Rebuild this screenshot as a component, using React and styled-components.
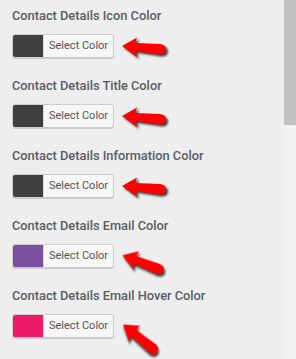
import React from "react";
import styled, { createGlobalStyle } from "styled-components";

const GlobalStyle = createGlobalStyle`
  html, body {
    margin: 0;
    padding: 0;
    background: #eeeeee;
    overflow: hidden;
  }
`;

const fields = [
  { label: "Contact Details Icon Color", color: "#404040", angle: 0 },
  { label: "Contact Details Title Color", color: "#404040", angle: 0 },
  { label: "Contact Details Information Color", color: "#404040", angle: 0 },
  { label: "Contact Details Email Color", color: "#7b4fa0", angle: 16 },
  { label: "Contact Details Email Hover Color", color: "#ef1a66", angle: 34 },
];

export default function App() {
  return (
    <>
      <GlobalStyle />
      <Page>
        <Panel>
          {fields.map((field, index) => (
            <Field key={index}>
              <Label>{field.label}</Label>
              <Row>
                <PickerButton>
                  <Swatch color={field.color} />
                  <ButtonText>Select Color</ButtonText>
                </PickerButton>
                <Arrow angle={field.angle} />
              </Row>
            </Field>
          ))}
        </Panel>
        <Track>
          <Thumb />
        </Track>
      </Page>
    </>
  );
}

function Arrow({ angle }) {
  return (
    <ArrowSvg width="50" height="24" viewBox="0 0 50 24" angle={angle}>
      <path
        d="M2 10 L17 1.5 L15.5 7 L40 8 Q46.5 9 46 14 Q45.5 19 39 18.5 L15.5 15 L17 21 Z"
        fill="#ff0000"
      />
    </ArrowSvg>
  );
}

const Page = styled.div`
  display: flex;
  width: 296px;
  height: 359px;
`;

const Panel = styled.div`
  flex: 1;
  padding: 7px 0 0 12px;
  display: flex;
  flex-direction: column;
`;

const Field = styled.div`
  height: 70px;
  display: flex;
  flex-direction: column;
`;

const Label = styled.div`
  font-family: Roboto, "Liberation Sans", sans-serif;
  font-weight: 500;
  font-size: 12.8px;
  line-height: 18px;
  color: #555d66;
  white-space: nowrap;
`;

const Row = styled.div`
  display: flex;
  align-items: center;
  margin-top: 7px;
`;

const PickerButton = styled.div`
  display: flex;
  height: 24px;
  box-sizing: border-box;
  border: 1px solid #cccccc;
  border-radius: 3px;
  box-shadow: 0 1px 0 #cccccc;
  background: #f7f7f7;
  overflow: hidden;
`;

const Swatch = styled.div`
  width: 30px;
  background: ${(p) => p.color};
`;

const ButtonText = styled.div`
  font-family: Roboto, "Liberation Sans", sans-serif;
  font-size: 11px;
  line-height: 22px;
  color: #555555;
  padding: 0 5px 0 5px;
  border-left: 1px solid #dddddd;
`;

const ArrowSvg = styled.svg`
  margin-left: 6px;
  margin-top: 4px;
  transform: rotate(${(p) => p.angle}deg);
  transform-origin: 10% 45%;
  filter: drop-shadow(2px 2px 1.2px rgba(0, 0, 0, 0.75));
`;

const Track = styled.div`
  width: 12px;
  background: #f1f1f1;
`;

const Thumb = styled.div`
  height: 125px;
  background: #c1c1c1;
`;
